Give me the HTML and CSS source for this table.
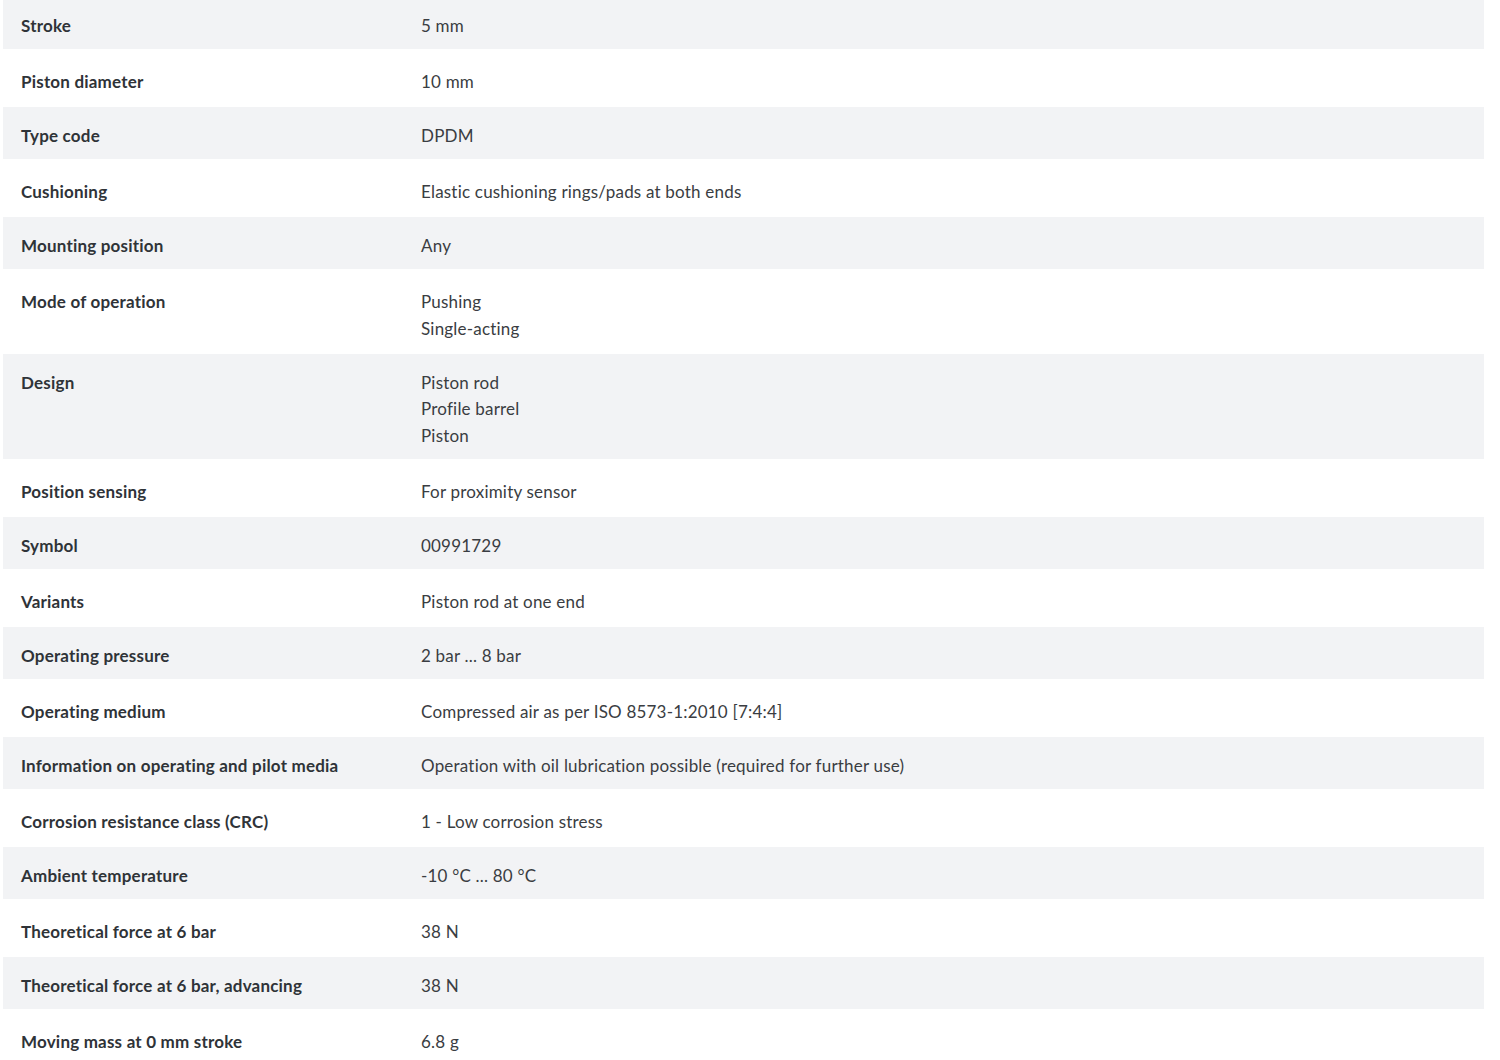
FILE: index.html
```html
<!DOCTYPE html>
<html lang="en">
<head>
<meta charset="utf-8">
<title>Technical data</title>
<link rel="stylesheet" href="styles.css">
</head>
<body>
<div class="specs">
  <div class="row alt"><div class="label">Stroke</div><div class="value">5 mm</div></div>
  <div class="row"><div class="label">Piston diameter</div><div class="value">10 mm</div></div>
  <div class="row alt"><div class="label">Type code</div><div class="value">DPDM</div></div>
  <div class="row"><div class="label">Cushioning</div><div class="value">Elastic cushioning rings/pads at both ends</div></div>
  <div class="row alt"><div class="label">Mounting position</div><div class="value">Any</div></div>
  <div class="row"><div class="label">Mode of operation</div><div class="value">Pushing<br>Single-acting</div></div>
  <div class="row alt"><div class="label">Design</div><div class="value">Piston rod<br>Profile barrel<br>Piston</div></div>
  <div class="row"><div class="label">Position sensing</div><div class="value">For proximity sensor</div></div>
  <div class="row alt"><div class="label">Symbol</div><div class="value">00991729</div></div>
  <div class="row"><div class="label">Variants</div><div class="value">Piston rod at one end</div></div>
  <div class="row alt"><div class="label">Operating pressure</div><div class="value">2 bar ... 8 bar</div></div>
  <div class="row"><div class="label">Operating medium</div><div class="value">Compressed air as per ISO 8573-1:2010 [7:4:4]</div></div>
  <div class="row alt"><div class="label">Information on operating and pilot media</div><div class="value">Operation with oil lubrication possible (required for further use)</div></div>
  <div class="row"><div class="label">Corrosion resistance class (CRC)</div><div class="value">1 - Low corrosion stress</div></div>
  <div class="row alt"><div class="label">Ambient temperature</div><div class="value">-10 °C ... 80 °C</div></div>
  <div class="row"><div class="label">Theoretical force at 6 bar</div><div class="value">38 N</div></div>
  <div class="row alt"><div class="label">Theoretical force at 6 bar, advancing</div><div class="value">38 N</div></div>
  <div class="row"><div class="label">Moving mass at 0 mm stroke</div><div class="value">6.8 g</div></div>
</div>
</body>
</html>
```
FILE: styles.css
```css
html, body {
  margin: 0;
  padding: 0;
  background: #ffffff;
}
body {
  font-family: Lato, "Liberation Sans", sans-serif;
  font-size: 17px;
  line-height: 26.5px;
  letter-spacing: 0.2px;
  color: #333333;
  overflow: hidden;
}
.specs {
  margin: -3px 16px 0 3px;
  width: 1481px;
}
.row {
  display: grid;
  grid-template-columns: 400px 1fr;
  padding: 20px 18px 11.5px;
}
.row.alt {
  background: #f2f3f5;
  padding: 16px 18px 9.5px;
}
.label {
  font-weight: 700;
  color: #2f3338;
}
.value {
  font-weight: 400;
  color: #3a3d42;
}
```
